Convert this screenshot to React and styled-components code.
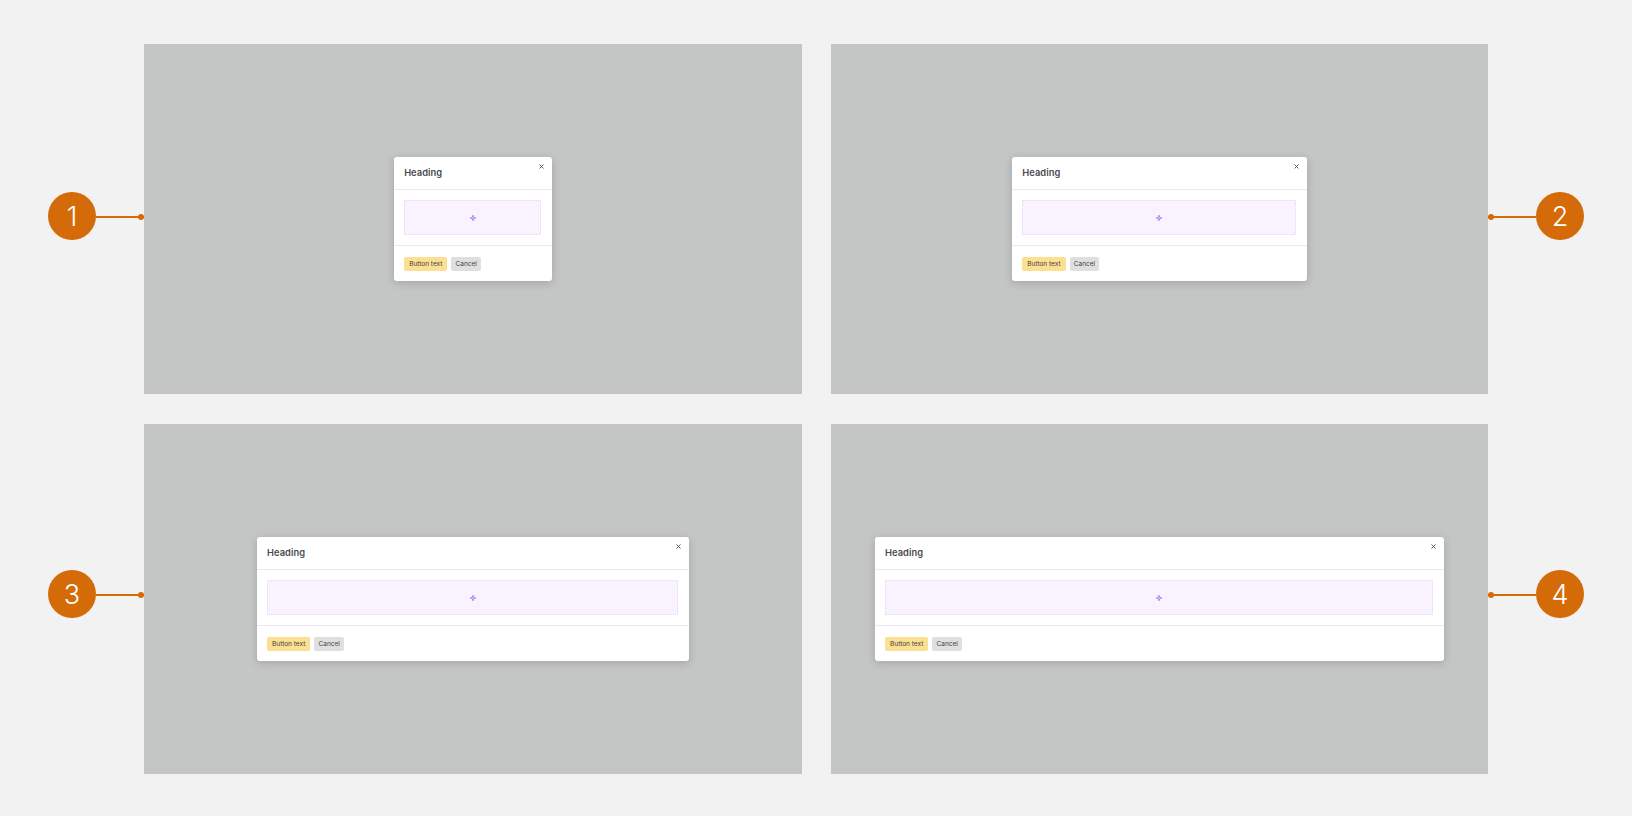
import React from "react";
import styled, { createGlobalStyle } from "styled-components";

const Global = createGlobalStyle`
  html, body { margin: 0; padding: 0; background: #f2f2f2; }
  body { font-family: Inter, "Liberation Sans", sans-serif; overflow: hidden; }
`;

const Page = styled.div`
  width: 1632px;
  height: 816px;
  padding: 44px 0 0 48px;
  box-sizing: border-box;
  display: flex;
  flex-direction: column;
  gap: 30px;
`;

const Row = styled.div`
  display: flex;
  height: 350px;
`;

const Callout = styled.div`
  width: 96px;
  flex: none;
  display: flex;
  flex-direction: ${(p) => (p.$right ? "row-reverse" : "row")};
  align-items: center;
  padding-bottom: ${(p) => p.$lift}px;
  box-sizing: border-box;
`;

const Badge = styled.div`
  width: 48px;
  height: 48px;
  flex: none;
  border-radius: 50%;
  background: #d56b08;
  color: #fff;
  font-size: 27px;
  font-weight: 300;
  display: flex;
  align-items: center;
  justify-content: center;
`;

const Connector = styled.div`
  flex: 1;
  height: 2px;
  margin-top: 2px;
  background: #d56b08;
  position: relative;
  &::after {
    content: "";
    position: absolute;
    top: -2px;
    ${(p) => (p.$right ? "left: 0;" : "right: 0;")}
    width: 6px;
    height: 6px;
    border-radius: 50%;
    background: #d56b08;
  }
`;

const Panels = styled.div`
  display: flex;
  gap: 29px;
`;

const Panel = styled.div`
  width: 657.5px;
  height: 350px;
  background: #c4c6c5;
  display: flex;
  align-items: center;
  justify-content: center;
`;

const Modal = styled.div`
  width: ${(p) => p.$width}px;
  background: #fff;
  border-radius: 3px;
  box-shadow: 0 2px 8px rgba(0, 0, 0, 0.17);
  position: relative;
`;

const Header = styled.div`
  height: 30px;
  padding: 0 10.6px 2px;
  display: flex;
  align-items: center;
  border-bottom: 1px solid #ebe9f0;
`;

const Heading = styled.div`
  font-size: 9.3px;
  font-weight: 600;
  color: #4a4a4a;
  letter-spacing: 0.05px;
`;

const Close = styled.svg`
  position: absolute;
  top: 7px;
  right: 7.8px;
  width: 5px;
  height: 5px;
`;

const Body = styled.div`
  padding: 10px 10.6px;
  border-bottom: 1px solid #ebe9f0;
`;

const Placeholder = styled.div`
  height: 35px;
  box-sizing: border-box;
  background: #f8f3ff;
  border: 1px dotted #e2d4fa;
  border-radius: 1px;
  display: flex;
  align-items: center;
  justify-content: center;
`;

const Footer = styled.div`
  height: 35px;
  padding: 0 10.6px;
  display: flex;
  align-items: center;
  gap: 4px;
`;

const Button = styled.div`
  height: 14px;
  padding: 0 ${(p) => (p.$primary ? 5 : 4.2)}px;
  border-radius: 2px;
  background: ${(p) => (p.$primary ? "#fbdf92" : "#dfdfdf")};
  color: #3f3f3f;
  font-size: 6.5px;
  line-height: 14px;
  white-space: nowrap;
`;

const Sparkle = () => (
  <svg width="6" height="6" viewBox="0 0 12 12" fill="none">
    <path d="M6 0.5 L7.2 4.8 L11.5 6 L7.2 7.2 L6 11.5 L4.8 7.2 L0.5 6 L4.8 4.8 Z" stroke="#a06cf6" strokeWidth="1.6" strokeLinejoin="round" />
  </svg>
);

const Dialog = ({ width }) => (
  <Modal $width={width}>
    <Header>
      <Heading>Heading</Heading>
    </Header>
    <Close viewBox="0 0 10 10" fill="none">
      <path d="M1 1 L9 9 M9 1 L1 9" stroke="#444" strokeWidth="1.7" />
    </Close>
    <Body>
      <Placeholder>
        <Sparkle />
      </Placeholder>
    </Body>
    <Footer>
      <Button $primary>Button text</Button>
      <Button>Cancel</Button>
    </Footer>
  </Modal>
);

const Marker = ({ n, right, lift }) => (
  <Callout $right={right} $lift={lift}>
    <Badge>{n}</Badge>
    <Connector $right={right} />
  </Callout>
);

export default function App() {
  return (
    <Page>
      <Global />
      <Row>
        <Marker n={1} lift={6} />
        <Panels>
          <Panel><Dialog width={158.4} /></Panel>
          <Panel><Dialog width={295} /></Panel>
        </Panels>
        <Marker n={2} lift={6} right />
      </Row>
      <Row>
        <Marker n={3} lift={10} />
        <Panels>
          <Panel><Dialog width={432.5} /></Panel>
          <Panel><Dialog width={569.5} /></Panel>
        </Panels>
        <Marker n={4} lift={10} right />
      </Row>
    </Page>
  );
}
